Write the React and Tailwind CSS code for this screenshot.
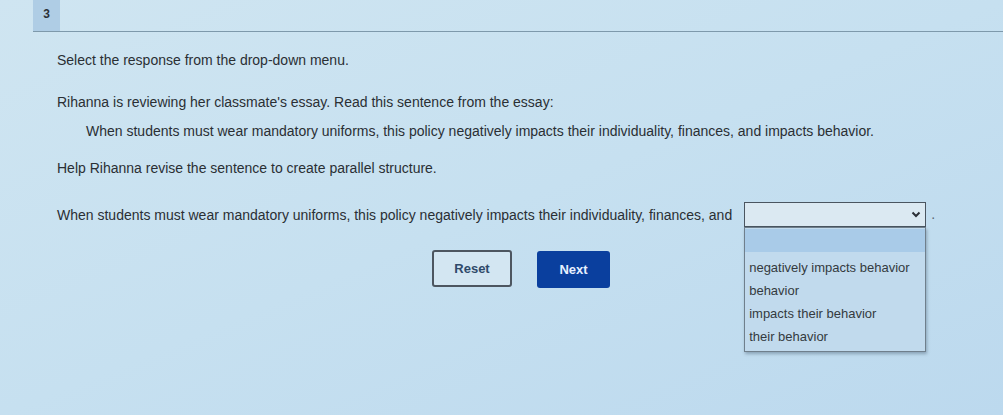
import React from "react";

export default function App() {
  const options = [
    "negatively impacts behavior",
    "behavior",
    "impacts their behavior",
    "their behavior",
  ];
  return (
    <div
      className="w-[1003px] h-[415px] overflow-hidden bg-gradient-to-br from-[#cfe5f1] via-[#c6e0f0] to-[#bcd9ee] text-[#2a2f34] text-[14px]"
      style={{ fontFamily: '"Liberation Sans", Arial, sans-serif' }}
    >
      <div className="ml-[33px] h-[32px] border-b border-[#7e99ab] flex">
        <div className="w-[27px] h-[31px] bg-[#afcde5] flex items-start justify-center pt-[5px] font-bold text-[12px] text-[#2b3036]">
          3
        </div>
      </div>
      <div className="pl-[57px]">
        <p className="mt-[20px] leading-[16px]">Select the response from the drop-down menu.</p>
        <p className="mt-[26px] leading-[16px]">
          Rihanna is reviewing her classmate's essay. Read this sentence from the essay:
        </p>
        <p className="mt-[13px] ml-[29px] leading-[16px]">
          When students must wear mandatory uniforms, this policy negatively impacts their individuality, finances, and impacts behavior.
        </p>
        <p className="mt-[21px] leading-[16px]">Help Rihanna revise the sentence to create parallel structure.</p>
        <div className="mt-[26px] flex items-center">
          <span className="leading-[16px]">
            When students must wear mandatory uniforms, this policy negatively impacts their individuality, finances, and
          </span>
          <div className="relative ml-[12px]">
            <div className="w-[182px] h-[25px] border border-[#4a5560] bg-[#dbe9f2] flex items-center justify-end pr-[4px]">
              <svg width="10" height="7" viewBox="0 0 10 7">
                <path d="M1.5 1.5 L5 5 L8.5 1.5" fill="none" stroke="#2b3036" strokeWidth="2" />
              </svg>
            </div>
            <div className="absolute left-0 top-[25px] w-[182px] border border-[#6f7f8c] bg-[#c1daed] shadow-[1px_2px_3px_rgba(40,60,80,0.35)] pb-[3px]">
              <div className="h-[23px] bg-[#a9cbe8] mt-[1px]" />
              <div className="pt-[4px]">
                {options.map((o) => (
                  <div key={o} className="h-[23px] flex items-center px-[4px] text-[13px] text-[#343a40]">
                    {o}
                  </div>
                ))}
              </div>
            </div>
          </div>
          <span className="ml-[5px] text-[#5a6670]">.</span>
        </div>
        <div className="mt-[22px] ml-[375px] flex items-center gap-[25px]">
          <button className="w-[80px] h-[37px] border-2 border-[#4d5660] rounded-[3px] bg-[#d3e6f2] font-bold text-[13px] text-[#2f4a6a]">
            Reset
          </button>
          <button className="w-[73px] h-[37px] rounded-[3px] bg-[#0a3f9e] font-bold text-[13px] text-[#e8f0ff] mt-[2px]">
            Next
          </button>
        </div>
      </div>
    </div>
  );
}
